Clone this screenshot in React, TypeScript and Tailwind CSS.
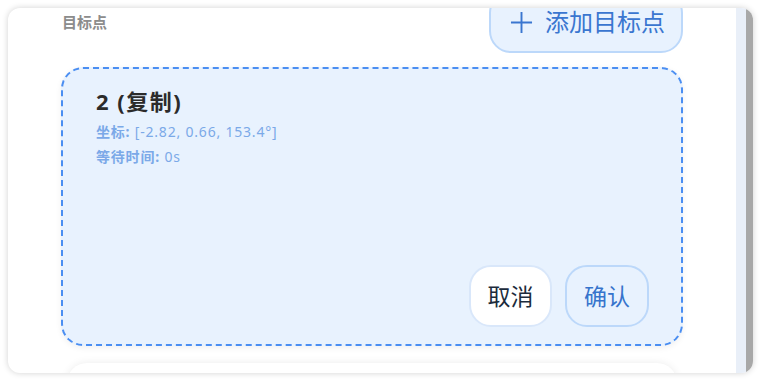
export default function App() {
  return (
    <div className="min-h-screen bg-white pt-[8px] pl-[8px] pr-[8px] font-['Noto_Sans','Noto_Sans_CJK_SC',sans-serif]">
      <div className="flex h-[365px] w-[745px] overflow-hidden rounded-[12px] bg-white shadow-[0_0_6px_rgba(0,0,0,0.18)]">
        <div className="flex-1 overflow-hidden px-[53px]">
          <div className="-mt-[17px]">
            <div className="flex h-[62px] items-center justify-between">
              <span className="pl-[1px] text-[15px] font-bold text-[#8c8c8c]">目标点</span>
              <button className="flex h-[62px] items-center gap-[12px] rounded-[22px] border-2 border-[#bcd8fa] bg-[#e8f2fe] pl-[19px] pr-[16px] text-[24px] text-[#3a76d0]">
                <svg width="23" height="23" viewBox="0 0 24 24" fill="none" stroke="currentColor" strokeWidth="2">
                  <path d="M12 1v22M1 12h22" />
                </svg>
                <span>添加目标点</span>
              </button>
            </div>

            <div className="mt-[14px] flex h-[279px] flex-col rounded-[22px] border-2 border-dashed border-[#4a8ef2] bg-[#e8f2fe] pl-[33px] pr-[32px] pt-[18px] pb-[17px] shadow-[0_2px_6px_rgba(0,0,0,0.06)]">
              <div className="text-[22px] font-bold leading-[28px] tracking-[1.5px] text-[#2b2b2b]">2 (复制)</div>
              <div className="mt-[4px] text-[14px] leading-[25px] tracking-[0.8px] text-[#7ba9e8]">
                <div>
                  <span className="font-bold">坐标:</span> [-2.82, 0.66, 153.4°]
                </div>
                <div>
                  <span className="font-bold">等待时间:</span> 0s
                </div>
              </div>
              <div className="mt-auto flex justify-end gap-[13px]">
                <button className="h-[62px] w-[83px] rounded-[22px] border-2 border-[#d9e7fa] bg-white text-[23px] text-[#1c2b3c]">
                  取消
                </button>
                <button className="h-[62px] w-[84px] rounded-[22px] border-2 border-[#bcd8fa] bg-[#e8f2fe] text-[23px] text-[#3674cc]">
                  确认
                </button>
              </div>
            </div>

            <div className="mx-[6px] mt-[17px] h-[60px] rounded-[20px] bg-white shadow-[0_0_8px_rgba(0,0,0,0.08)]" />
          </div>
        </div>
        <div className="w-[10px] bg-[#e9eff8]" />
        <div className="w-[7px] bg-[#a8a8a8]" />
      </div>
    </div>
  );
}
